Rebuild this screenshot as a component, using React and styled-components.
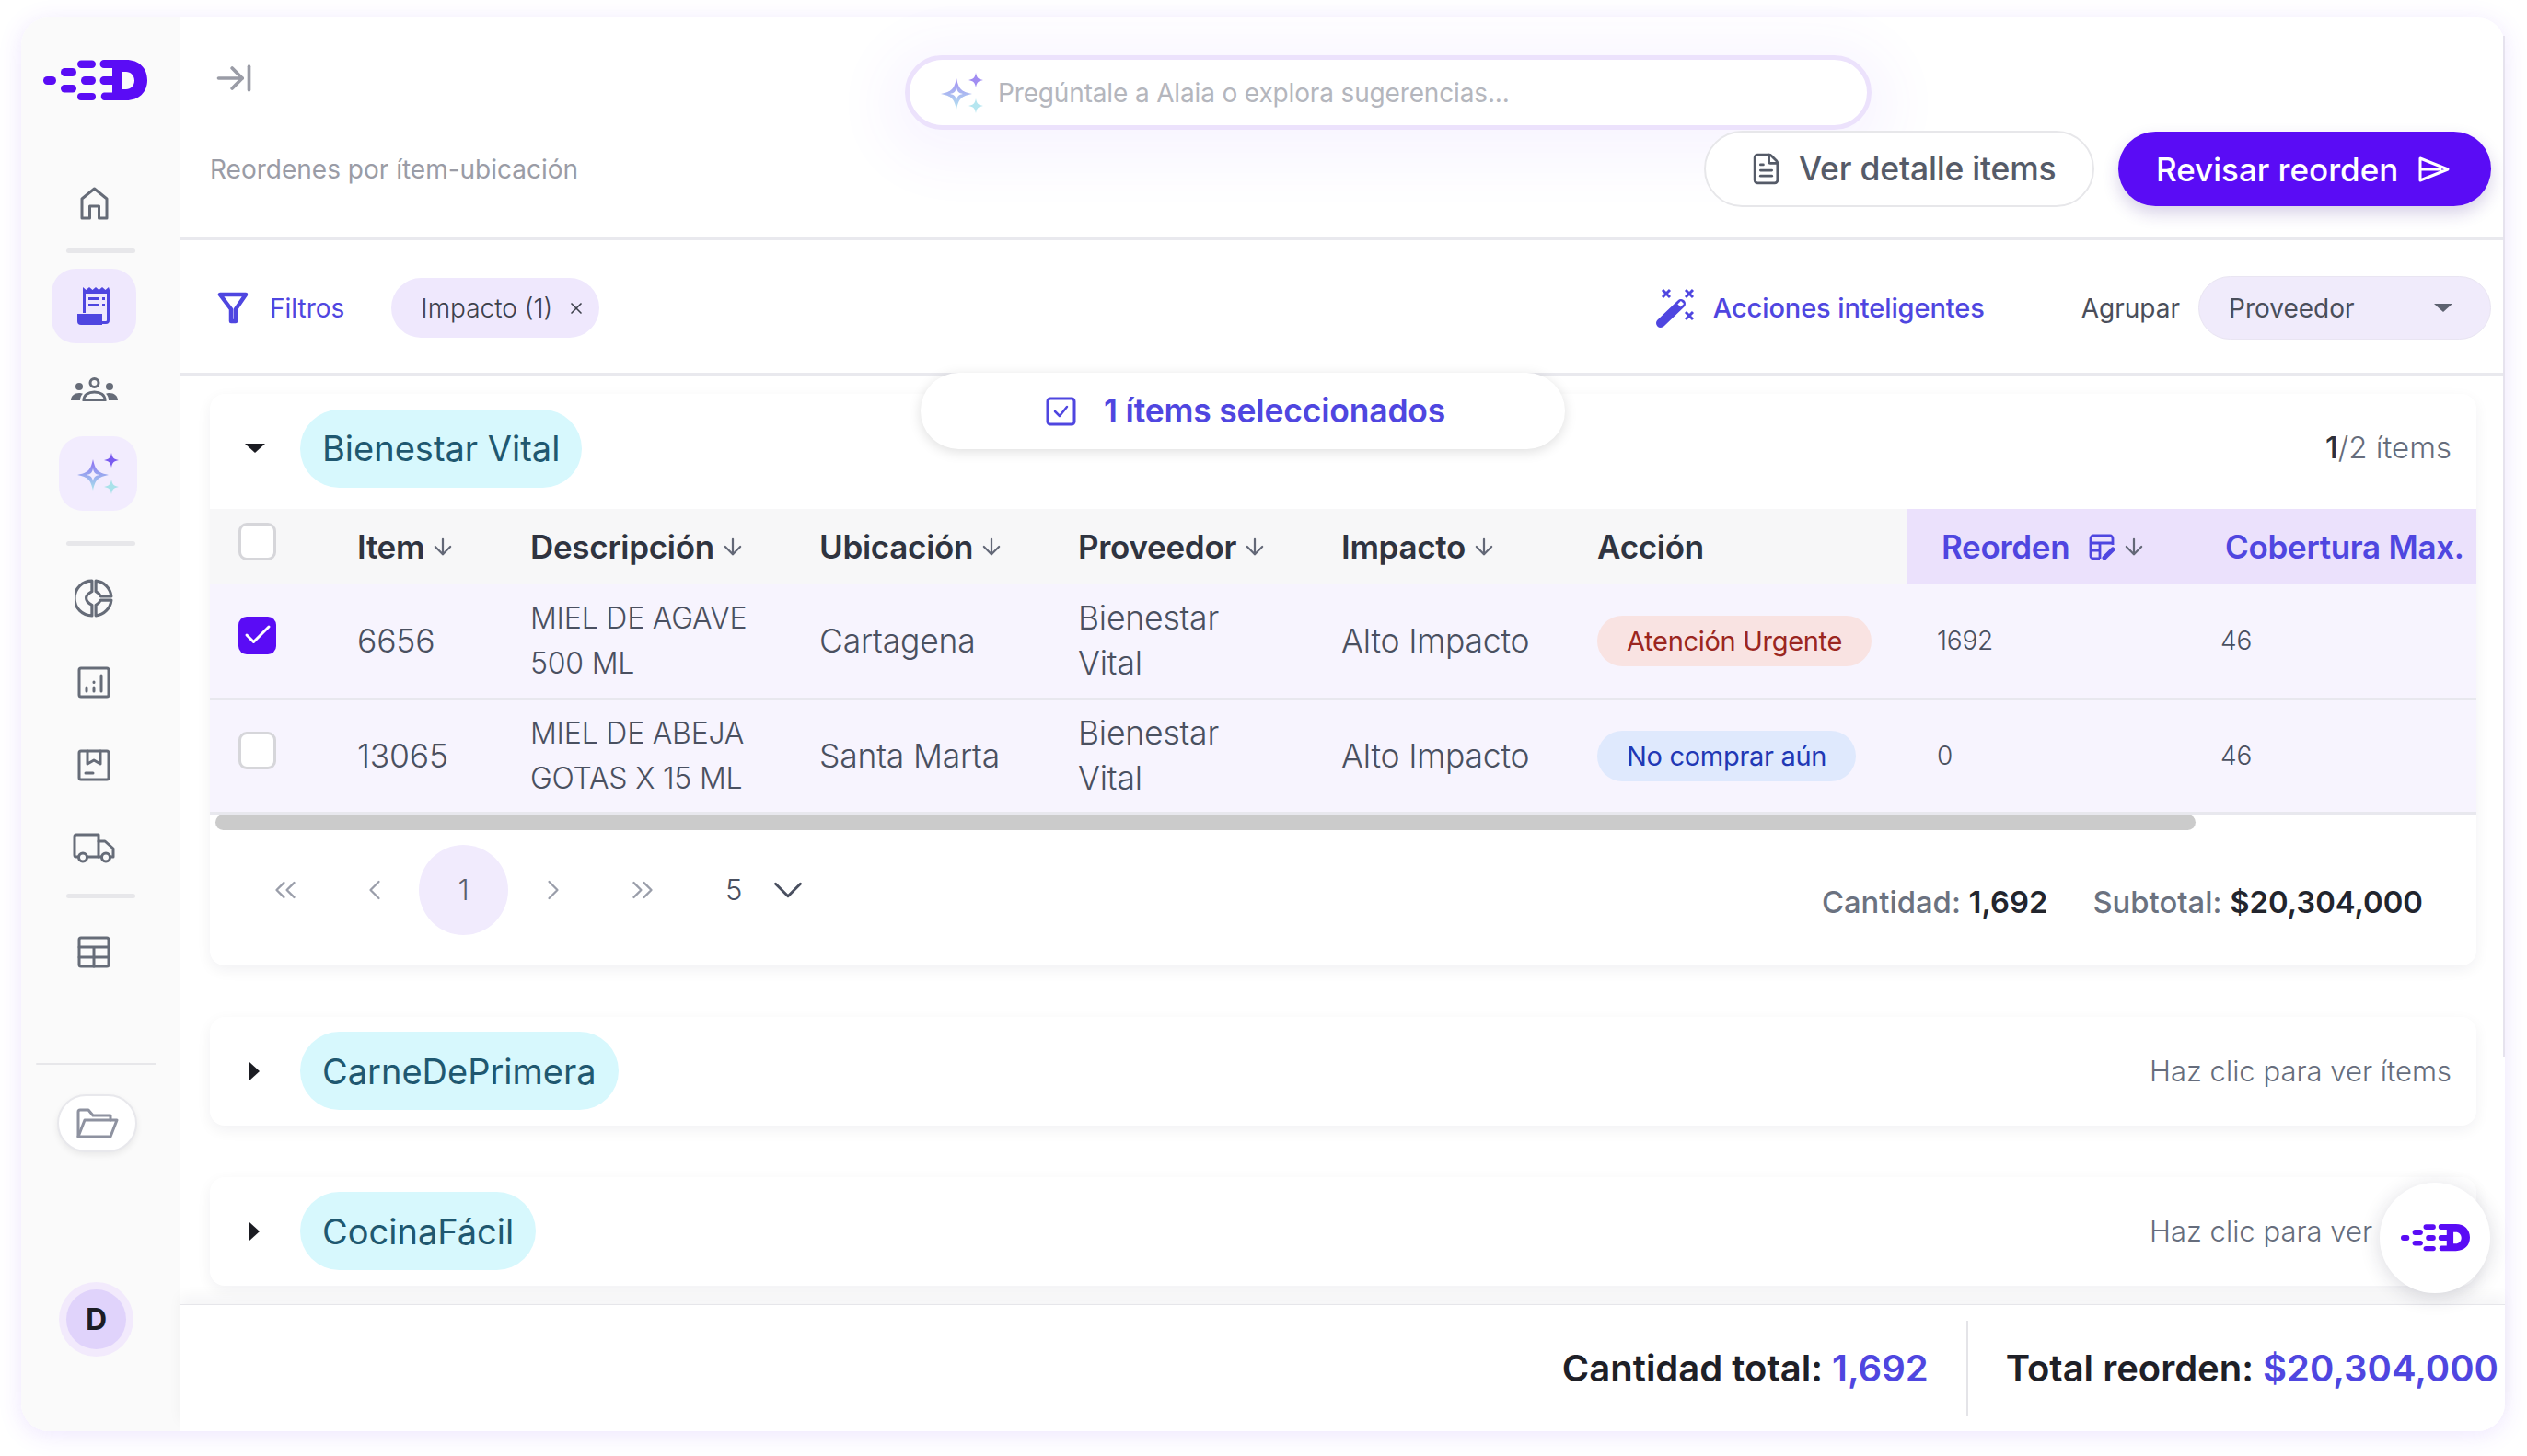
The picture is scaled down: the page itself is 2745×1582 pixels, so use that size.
import styled, { createGlobalStyle } from "styled-components";
import {
  ArrowDown,
  ArrowRightToLine,
  Check,
  ChevronDown,
  ChevronLeft,
  ChevronRight,
  ChevronsLeft,
  ChevronsRight,
  FileText,
  X,
} from "lucide-react";

const violet = "#5a0cf5";
const indigo = "#4f46e0";

const GlobalStyle = createGlobalStyle`
  * { box-sizing: border-box; }
  html, body { margin: 0; background: #fff; }
  body {
    font-family: Inter, "Open Sans", sans-serif;
    overflow: hidden;
    color: #2c303a;
  }
`;

const Page = styled.div`
  width: 2745px;
  height: 1582px;
  padding: 19px 0 0 23px;
`;

const Shell = styled.div`
  position: relative;
  display: flex;
  width: 2698px;
  height: 1536px;
  border-radius: 30px;
  background: #fff;
  box-shadow: 0 4px 26px rgba(120, 60, 245, 0.13);
`;

const ScrollEdge = styled.span`
  position: absolute;
  top: 20px;
  right: 0;
  width: 2px;
  height: 1109px;
  background: #e6e3ee;
`;

const Sidebar = styled.aside`
  flex: 0 0 172px;
  display: flex;
  flex-direction: column;
  align-items: flex-start;
  background: #fafafa;
  border-radius: 30px 0 0 30px;
`;

const LogoMark = styled.svg`
  display: block;
  flex: none;
  margin-left: ${(p) => p.$left || 0}px;
  margin-top: ${(p) => p.$top || 0}px;
`;

const NavSlot = styled.div`
  display: flex;
  align-items: center;
  justify-content: center;
  width: ${(p) => p.$w || 92}px;
  height: ${(p) => p.$h || 60}px;
  margin-top: ${(p) => p.$mt}px;
  margin-left: ${(p) => p.$ml || 33}px;
  border-radius: 26px;
  background: ${(p) => p.$bg || "transparent"};
  color: #666c78;
`;

const NavRule = styled.div`
  width: ${(p) => p.$w || 75}px;
  height: ${(p) => p.$h || 5}px;
  margin-top: ${(p) => p.$mt}px;
  margin-left: ${(p) => p.$ml || 49}px;
  border-radius: 3px;
  background: #e7e7ea;
`;

const FolderButton = styled.button`
  display: flex;
  align-items: center;
  justify-content: center;
  width: 87px;
  height: 63px;
  margin-top: 32px;
  margin-left: 39px;
  padding: 0;
  border: 2px solid #e8e8ec;
  border-radius: 32px;
  background: #fff;
  box-shadow: 0 3px 7px rgba(0, 0, 0, 0.07);
  color: #8e92a0;
`;

const Avatar = styled.div`
  display: flex;
  align-items: center;
  justify-content: center;
  width: 65px;
  height: 65px;
  margin-top: 149px;
  margin-left: 49px;
  border-radius: 50%;
  background: #e0d3fb;
  box-shadow: 0 0 0 8px #f2eafc;
  color: #1c1d24;
  font-size: 32px;
  font-weight: 700;
`;

const Main = styled.main`
  flex: 1;
  min-width: 0;
  display: flex;
  flex-direction: column;
`;

const Header = styled.header`
  flex: 0 0 242px;
  padding-top: 41px;
  border-bottom: 3px solid #e9e9ee;
`;

const HeaderTop = styled.div`
  display: flex;
  align-items: flex-start;
  height: 82px;
  padding-left: 37px;
`;

const Collapse = styled.div`
  display: flex;
  width: 44px;
  height: 44px;
  margin-top: 3px;
  color: #9a9ca6;
`;

const SearchBox = styled.div`
  display: flex;
  align-items: center;
  width: 1050px;
  height: 81px;
  margin-left: 707px;
  padding-left: 34px;
  border: 5px solid #ece2fc;
  border-radius: 41px;
  background: #fff;
  box-shadow: 0 12px 60px 24px rgba(130, 80, 250, 0.055);
`;

const Placeholder = styled.span`
  margin-left: 16px;
  color: #b4b6bd;
  font-size: 28px;
  letter-spacing: -0.15px;
`;

const HeaderBottom = styled.div`
  display: flex;
  align-items: center;
  height: 83px;
  padding: 0 15px 0 33px;
`;

const PageTitle = styled.h1`
  flex: 1;
  margin: 0;
  color: #9a9ca6;
  font-size: 28px;
  font-weight: 400;
`;

const GhostButton = styled.button`
  display: flex;
  align-items: center;
  gap: 17px;
  height: 83px;
  width: 424px;
  padding: 0 0 0 47px;
  border: 2px solid #e7e7ea;
  border-radius: 42px;
  background: #fff;
  color: #555b68;
  font: 500 35.5px Inter, sans-serif;
  letter-spacing: -0.2px;
`;

const PrimaryButton = styled.button`
  display: flex;
  align-items: center;
  gap: 22px;
  height: 81px;
  width: 405px;
  margin-left: 26px;
  padding: 0 0 0 41px;
  border: none;
  border-radius: 41px;
  background: ${violet};
  box-shadow: 0 8px 18px rgba(60, 30, 140, 0.2);
  color: #fff;
  font: 500 35px Inter, sans-serif;
`;

const FilterBar = styled.div`
  flex: 0 0 147px;
  display: flex;
  align-items: center;
  padding: 3px 15px 0 41px;
  border-bottom: 3px solid #e9e9ee;
  color: #4b5060;
`;

const FunnelWrap = styled.span`
  display: flex;
  margin-right: 23px;
`;

const FilterLink = styled.span`
  color: ${indigo};
  font-size: 28px;
  font-weight: 400;
`;

const Chip = styled.div`
  display: flex;
  align-items: center;
  gap: 16px;
  height: 65px;
  margin-left: 51px;
  padding: 0 15px 0 32px;
  border-radius: 33px;
  background: #efe8fd;
  color: #3d404b;
  font-size: 28px;
  font-weight: 350;
`;

const SmartActions = styled.div`
  display: flex;
  align-items: center;
  gap: 17px;
  margin-left: auto;
  color: ${indigo};
  font-size: 29px;
  font-weight: 500;
  letter-spacing: -0.1px;
`;

const GroupLabel = styled.span`
  margin-left: 105px;
  color: #4a4e5a;
  font-size: 28px;
`;

const GroupSelect = styled.div`
  display: flex;
  align-items: center;
  justify-content: space-between;
  width: 318px;
  height: 69px;
  margin-left: 20px;
  padding: 0 41px 0 32px;
  border: 1px solid #e9e5f2;
  border-radius: 35px;
  background: #f0ebfb;
  color: #4a4e5a;
  font-size: 28px;
`;

const CaretDown = styled.span`
  width: 0;
  height: 0;
  border-left: 10px solid transparent;
  border-right: 10px solid transparent;
  border-top: 9px solid #5d6270;
`;

const SelectedPill = styled.div`
  position: absolute;
  top: 386px;
  left: 977px;
  z-index: 3;
  display: flex;
  align-items: center;
  gap: 30px;
  width: 700px;
  height: 83px;
  padding-left: 136px;
  border-radius: 42px;
  background: #fff;
  box-shadow: 0 3px 14px rgba(0, 0, 0, 0.13);
  color: ${indigo};
  font-size: 35.5px;
  font-weight: 600;
  letter-spacing: -0.2px;
`;

const Content = styled.div`
  flex: 1;
  min-height: 0;
  overflow: hidden;
  display: flex;
  flex-direction: column;
  gap: 56px;
  padding: 20px 31px 0 33px;
`;

const GroupCard = styled.section`
  flex: none;
  border-radius: 16px;
  background: #fff;
  box-shadow: 0 5px 16px rgba(20, 20, 50, 0.06);
`;

const GroupHead = styled.div`
  display: flex;
  align-items: center;
  height: ${(p) => p.$h}px;
  padding: 0 27px ${(p) => p.$low || 0}px 43px;
`;

const Caret = styled.span`
  width: 0;
  height: 0;
  ${(p) =>
    p.$open
      ? `border-left: 11px solid transparent;
         border-right: 11px solid transparent;
         border-top: 10px solid #1b1c22;
         margin: 0 38px 0 -5px;`
      : `border-top: 10px solid transparent;
         border-bottom: 10px solid transparent;
         border-left: 11px solid #1b1c22;
         margin-right: 44px;`}
`;

const GroupName = styled.div`
  display: flex;
  align-items: center;
  height: 85px;
  padding: 0 24px;
  border-radius: 43px;
  background: #d7f8fd;
  color: #1f5870;
  font-size: 38px;
  font-weight: 400;
`;

const GroupHint = styled.span`
  margin-left: auto;
  margin-bottom: ${(p) => (p.$count ? 3 : 0)}px;
  color: #666d7c;
  font-size: ${(p) => (p.$count ? 33 : 31)}px;
  font-weight: 300;

  b {
    color: #2c303a;
    font-weight: 500;
  }
`;

const Table = styled.table`
  width: 2462px;
  border-collapse: collapse;
  table-layout: fixed;
`;

const Th = styled.th`
  height: 82px;
  padding: 0 0 0 ${(p) => p.$pad || 0}px;
  background: ${(p) => (p.$accent ? "#ebe1fc" : "#f7f7f8")};
  color: ${(p) => (p.$accent ? indigo : "#2f3440")};
  font-size: 35px;
  font-weight: 600;
  letter-spacing: -0.3px;
  text-align: left;
  white-space: nowrap;
`;

const ThInner = styled.span`
  display: inline-flex;
  align-items: center;
  gap: 6px;

  svg.sort {
    color: #636877;
  }
`;

const Row = styled.tr`
  background: #f7f4fe;
  border-bottom: 3px solid #e8e8ee;
`;

const Td = styled.td`
  height: 124px;
  padding: 0 0 0 ${(p) => p.$pad || 0}px;
  color: #4a5060;
  font-size: ${(p) => p.$size || 35.5}px;
  font-weight: 300;
  line-height: 49px;
  letter-spacing: -0.2px;
`;

const Box = styled.span`
  display: flex;
  align-items: center;
  justify-content: center;
  width: 41px;
  height: 41px;
  margin: 0 0 12px 31px;
  border: ${(p) => (p.$on ? "none" : "3px solid #d6d6da")};
  border-radius: 9px;
  background: ${(p) => (p.$on ? violet : "#fff")};
  color: #fff;
`;

const Badge = styled.span`
  display: inline-flex;
  align-items: center;
  height: 55px;
  padding: 0 32px;
  border-radius: 28px;
  background: ${(p) => p.$bg};
  color: ${(p) => p.$fg};
  font-size: 29px;
  font-weight: 400;
  letter-spacing: -0.3px;
`;

const ScrollThumb = styled.div`
  width: 2151px;
  height: 17px;
  margin-left: 6px;
  border-radius: 9px;
  background: #cbcbcb;
`;

const CardFoot = styled.div`
  display: flex;
  height: 147px;
  padding: 0 58px 0 33px;
`;

const Pager = styled.div`
  display: flex;
  align-items: center;
  height: 98px;
  margin-top: 16px;
  color: #9a9eaa;
`;

const PageCell = styled.span`
  display: flex;
  align-items: center;
  justify-content: center;
  width: 97px;
  height: 98px;
  border-radius: 50%;
  background: ${(p) => (p.$on ? "#f1ebfd" : "transparent")};
  font-size: 31px;
  font-weight: 300;
  color: ${(p) => (p.$on ? "#5a5f6c" : "inherit")};
`;

const PageSize = styled.span`
  display: flex;
  align-items: center;
  gap: 23px;
  margin-left: 42px;
  color: #4a5060;
  font-size: 31px;
  font-weight: 300;
`;

const CardTotals = styled.div`
  display: flex;
  align-items: center;
  gap: 49px;
  height: 50px;
  margin: 53px 0 0 auto;
  color: #6b7280;
  font-size: 32.8px;
  font-weight: 500;

  b {
    color: #22252d;
    font-weight: 600;
  }
`;

const Footer = styled.footer`
  position: relative;
  flex: 0 0 138px;
  display: flex;
  align-items: center;
  justify-content: flex-end;
  padding-right: 7px;
  border-top: 1px solid #e6e6ea;
  border-radius: 0 0 30px 0;
  background: #fff;
  box-shadow: 0 -10px 14px rgba(30, 30, 50, 0.04);
  color: #1e2027;
  font-size: 40px;
  font-weight: 600;

  b {
    color: ${indigo};
    font-weight: 600;
  }
`;

const FootDivider = styled.span`
  width: 2px;
  height: 104px;
  margin: 0 41px;
  background: #e4e4e8;
`;

const FloatingLogo = styled.button`
  position: absolute;
  right: 16px;
  bottom: 150px;
  z-index: 3;
  display: flex;
  align-items: center;
  justify-content: center;
  width: 120px;
  height: 120px;
  padding: 0;
  border: none;
  border-radius: 50%;
  background: #fff;
  box-shadow: 0 4px 22px rgba(30, 30, 60, 0.16);
`;

const Logo = ({ width = 113, ...rest }) => (
  <LogoMark width={width} viewBox="0 0 113 44" fill={violet} {...rest}>
    <rect x="0" y="18" width="14" height="9" rx="4.5" />
    <rect x="19" y="9" width="17" height="9" rx="4.5" />
    <rect x="19" y="27" width="17" height="8.5" rx="4.2" />
    <rect x="37" y="0.5" width="20" height="8.5" rx="4.2" />
    <rect x="41" y="18" width="16" height="9" rx="4.5" />
    <rect x="37" y="36" width="20" height="8" rx="4" />
    <path
      fillRule="evenodd"
      d="M66 0H90C104 0 113 9 113 22S104 44 90 44H66A4.4 4.4 0 0 1 66 35.500H75V27H66A4.500 4.500 0 0 1 66 18H75V9H66A4.500 4.500 0 0 1 66 0ZM86 13V32H90C95 32 99 28 99 22.500S95 13 90 13Z"
    />
  </LogoMark>
);

const Star = ({ cx, cy, r, fill }) => (
  <path
    fill={fill}
    d={`M${cx} ${cy - r}C${cx + r * 0.15} ${cy - r * 0.3} ${cx + r * 0.3} ${cy - r * 0.15} ${cx + r} ${cy}C${cx + r * 0.3} ${cy + r * 0.15} ${cx + r * 0.15} ${cy + r * 0.3} ${cx} ${cy + r}C${cx - r * 0.15} ${cy + r * 0.3} ${cx - r * 0.3} ${cy + r * 0.15} ${cx - r} ${cy}C${cx - r * 0.3} ${cy - r * 0.15} ${cx - r * 0.15} ${cy - r * 0.3} ${cx} ${cy - r}Z`}
  />
);

const NavSparkles = () => (
  <svg width="46" height="46" viewBox="0 0 46 46">
    <defs>
      <linearGradient id="navStar" x1="0" y1="0" x2="0" y2="1">
        <stop offset="0" stopColor="#8a6cf2" />
        <stop offset="1" stopColor="#a9e4ec" />
      </linearGradient>
    </defs>
    <Star cx={17} cy={24} r={17} fill="url(#navStar)" />
    <Star cx={17} cy={24} r={7} fill="#f2ecfe" />
    <Star cx={37} cy={8} r={8} fill="#7a5bf0" />
    <Star cx={37} cy={37} r={8} fill="#a9e2ea" />
  </svg>
);

const SearchSparkles = () => (
  <svg width="46" height="44" viewBox="0 0 46 44">
    <defs>
      <linearGradient id="searchStar" x1="0" y1="0" x2="0" y2="1">
        <stop offset="0" stopColor="#a18df2" />
        <stop offset="1" stopColor="#b5e6f0" />
      </linearGradient>
    </defs>
    <Star cx={17} cy={23} r={17} fill="url(#searchStar)" />
    <Star cx={17} cy={23} r={7} fill="#fff" />
    <Star cx={38} cy={8} r={8} fill="#a18df2" />
    <Star cx={38} cy={36} r={8} fill="#b5e6f0" />
  </svg>
);

const stroke = {
  fill: "none",
  stroke: "currentColor",
  strokeWidth: 3,
  strokeLinejoin: "round",
  strokeLinecap: "round",
};

const HomeIcon = () => (
  <svg width="31" height="36" viewBox="0 0 31 36" {...stroke}>
    <path d="M2 34V13L15.500 2 29 13V34H20.500V21H10.500V34Z" />
  </svg>
);

const ReceiptIcon = () => (
  <svg width="36" height="41" viewBox="0 0 36 41" fill={indigo}>
    <path d="M6 0l3.500 3L13 0l3.500 3L20 0l3.500 3L27 0l3.500 3L34 0 35 3V36a4 4 0 0 1-4 4H27V37h4a1 1 0 0 0 1-1V7H9V28H6Z" />
    <rect x="12" y="11" width="12" height="3" />
    <rect x="12" y="18" width="12" height="3" />
    <rect x="27" y="11" width="3" height="3" />
    <rect x="27" y="18" width="3" height="3" />
    <path d="M0 29H27V41H4a4 4 0 0 1-4-4Z" />
  </svg>
);

const TeamIcon = () => (
  <svg width="51" height="26" viewBox="0 0 51 26" fill="currentColor">
    <circle cx="25.500" cy="6" r="4.500" fill="none" stroke="currentColor" strokeWidth="3" />
    <circle cx="9" cy="10" r="4" />
    <circle cx="42" cy="10" r="4" />
    <path d="M14 25c0-6 5-9 11.500-9S37 19 37 25Z" fill="none" stroke="currentColor" strokeWidth="3" />
    <path d="M0 25c0-5 4-8 9-8 1.500 0 3 .3 4 .8-2 2-3 4.500-3 7.200Z" />
    <path d="M51 25c0-5-4-8-9-8-1.500 0-3 .3-4 .8 2 2 3 4.500 3 7.200Z" />
  </svg>
);

const PieIcon = () => (
  <svg width="42" height="42" viewBox="0 0 40 40" {...stroke}>
    <path d="M18 2A18 18 0 0 0 18 38V27C14 25 12 23 12 20S14 15 18 13Z" />
    <path d="M22 2A18 18 0 0 1 38 18H27C26 16 24 14 22 13Z" />
    <path d="M38 22A18 18 0 0 1 22 38V27C24 26 26 24 27 22Z" />
  </svg>
);

const BarsIcon = () => (
  <svg width="36" height="35" viewBox="0 0 36 35" {...stroke}>
    <rect x="2" y="2" width="32" height="31" rx="2" />
    <path d="M10 23V27M18 23V27M18 17V17.500M26 10V27" />
  </svg>
);

const BoxIcon = () => (
  <svg width="36" height="35" viewBox="0 0 36 35" {...stroke}>
    <rect x="2" y="2" width="32" height="31" rx="2" />
    <path d="M11 2V16L18 12 25 16V2M9 26H17" />
  </svg>
);

const TruckIcon = () => (
  <svg width="46" height="33" viewBox="0 0 46 33" {...stroke}>
    <path d="M6 26H4a2 2 0 0 1-2-2V4a2 2 0 0 1 2-2H28V26H16" />
    <path d="M28 9h7l9 8v9h-3M28 26h3" />
    <circle cx="11" cy="26.500" r="4.500" />
    <circle cx="36" cy="26.500" r="4.500" />
  </svg>
);

const GridIcon = () => (
  <svg width="36" height="35" viewBox="0 0 36 35" {...stroke}>
    <rect x="2" y="2" width="32" height="31" rx="2" />
    <path d="M2 12H34M2 23H34M18 12V33" />
  </svg>
);

const FolderIcon = () => (
  <svg width="47" height="33" viewBox="0 0 47 33" {...stroke}>
    <path d="M3 31V4a2 2 0 0 1 2-2H14L19 8H38V13" />
    <path d="M3 31L10 13H45L38 31Z" />
  </svg>
);

const FunnelIcon = () => (
  <svg width="34" height="35" viewBox="0 0 34 35" fill="none" stroke={indigo} strokeWidth="4.500" strokeLinejoin="round">
    <path d="M3 3H31L20 19V32H15V19Z" />
  </svg>
);

const WandIcon = () => (
  <svg width="46" height="44" viewBox="0 0 46 44" fill="none" stroke={indigo}>
    <path d="M6 38L28 17" strokeWidth="10" strokeLinecap="round" />
    <path d="M26 19L29.500 15.500" stroke="#fff" strokeWidth="4.500" />
    <path d="M8 2l8 8M16 2l-8 8M33 2l8 8M41 2l-8 8M33 26l8 8M41 26l-8 8" strokeWidth="3" />
  </svg>
);

const SendIcon = () => (
  <svg width="34" height="28" viewBox="0 0 34 28" {...stroke}>
    <path d="M2 2L32 14 2 26ZM2 14H24" />
  </svg>
);

const CheckSquare = () => (
  <svg width="33" height="32" viewBox="0 0 33 32" {...stroke}>
    <rect x="2" y="2" width="29" height="28" rx="3" />
    <path d="M10 16l5 5 8-10" strokeWidth="2.500" />
  </svg>
);

const EditTableIcon = () => (
  <svg width="29" height="29" viewBox="0 0 29 29" fill="none" stroke={indigo} strokeWidth="2.800">
    <path d="M12 27H5a3 3 0 0 1-3-3V5a3 3 0 0 1 3-3H23a3 3 0 0 1 3 3V12M2 10H26M2 18H13M12 10V27" />
    <path d="M17 26L26 17" strokeWidth="5" strokeLinecap="round" />
  </svg>
);

const Sort = () => <ArrowDown className="sort" size={28} strokeWidth={1.9} />;

const rows = [
  {
    id: "6656",
    selected: true,
    description: ["MIEL DE AGAVE", "500 ML"],
    location: "Cartagena",
    action: "Atención Urgente",
    bg: "#f9e3e2",
    fg: "#9b2620",
    reorder: "1692",
  },
  {
    id: "13065",
    selected: false,
    description: ["MIEL DE ABEJA", "GOTAS X 15 ML"],
    location: "Santa Marta",
    action: "No comprar aún",
    bg: "#dfe9fd",
    fg: "#2138b5",
    reorder: "0",
  },
];

const headers = ["Item", "Descripción", "Ubicación", "Proveedor", "Impacto"];

export default function App() {
  return (
    <Page>
      <GlobalStyle />
      <Shell>
        <Sidebar>
          <Logo $left={24} $top={46} />
          <NavSlot $mt={86} $h={52}>
            <HomeIcon />
          </NavSlot>
          <NavRule $mt={23} />
          <NavSlot $mt={17} $h={81} $bg="#efe8fd">
            <ReceiptIcon />
          </NavSlot>
          <NavSlot $mt={20}>
            <TeamIcon />
          </NavSlot>
          <NavSlot $mt={21} $h={81} $w={85} $ml={41} $bg="#f2ecfe">
            <NavSparkles />
          </NavSlot>
          <NavRule $mt={33} />
          <NavSlot $mt={27}>
            <PieIcon />
          </NavSlot>
          <NavSlot $mt={31}>
            <BarsIcon />
          </NavSlot>
          <NavSlot $mt={30}>
            <BoxIcon />
          </NavSlot>
          <NavSlot $mt={30}>
            <TruckIcon />
          </NavSlot>
          <NavRule $mt={20} />
          <NavSlot $mt={28}>
            <GridIcon />
          </NavSlot>
          <NavRule $mt={91} $w={131} $h={2} $ml={16} />
          <FolderButton>
            <FolderIcon />
          </FolderButton>
          <Avatar>D</Avatar>
        </Sidebar>

        <Main>
          <Header>
            <HeaderTop>
              <Collapse>
                <ArrowRightToLine size={44} strokeWidth={2} />
              </Collapse>
              <SearchBox>
                <SearchSparkles />
                <Placeholder>Pregúntale a Alaia o explora sugerencias...</Placeholder>
              </SearchBox>
            </HeaderTop>
            <HeaderBottom>
              <PageTitle>Reordenes por ítem-ubicación</PageTitle>
              <GhostButton>
                <FileText size={37} strokeWidth={1.8} />
                Ver detalle items
              </GhostButton>
              <PrimaryButton>
                Revisar reorden
                <SendIcon />
              </PrimaryButton>
            </HeaderBottom>
          </Header>

          <FilterBar>
            <FunnelWrap>
              <FunnelIcon />
            </FunnelWrap>
            <FilterLink>Filtros</FilterLink>
            <Chip>
              Impacto (1)
              <X size={20} strokeWidth={2} />
            </Chip>
            <SmartActions>
              <WandIcon />
              Acciones inteligentes
            </SmartActions>
            <GroupLabel>Agrupar</GroupLabel>
            <GroupSelect>
              Proveedor
              <CaretDown />
            </GroupSelect>
          </FilterBar>

          <Content>
            <GroupCard>
              <GroupHead $h={125} $low={7}>
                <Caret $open />
                <GroupName>Bienestar Vital</GroupName>
                <GroupHint $count>
                  <b>1</b>/2 ítems
                </GroupHint>
              </GroupHead>
              <Table>
                <colgroup>
                  <col style={{ width: 160 }} />
                  <col style={{ width: 188 }} />
                  <col style={{ width: 314 }} />
                  <col style={{ width: 281 }} />
                  <col style={{ width: 286 }} />
                  <col style={{ width: 278 }} />
                  <col style={{ width: 337 }} />
                  <col style={{ width: 308 }} />
                  <col style={{ width: 310 }} />
                </colgroup>
                <thead>
                  <tr>
                    <Th>
                      <Box />
                    </Th>
                    {headers.map((label) => (
                      <Th key={label}>
                        <ThInner>
                          {label}
                          <Sort />
                        </ThInner>
                      </Th>
                    ))}
                    <Th>Acción</Th>
                    <Th $accent $pad={37}>
                      <ThInner>
                        Reorden
                        <span style={{ width: 9 }} />
                        <EditTableIcon />
                        <Sort />
                      </ThInner>
                    </Th>
                    <Th $accent $pad={37}>
                      Cobertura Max.
                    </Th>
                  </tr>
                </thead>
                <tbody>
                  {rows.map((row) => (
                    <Row key={row.id}>
                      <Td>
                        <Box $on={row.selected}>
                          {row.selected && <Check size={36} strokeWidth={2} />}
                        </Box>
                      </Td>
                      <Td>{row.id}</Td>
                      <Td $size={32}>
                        {row.description[0]}
                        <br />
                        {row.description[1]}
                      </Td>
                      <Td>{row.location}</Td>
                      <Td>
                        Bienestar
                        <br />
                        Vital
                      </Td>
                      <Td>Alto Impacto</Td>
                      <Td>
                        <Badge $bg={row.bg} $fg={row.fg}>
                          {row.action}
                        </Badge>
                      </Td>
                      <Td $pad={32} $size={28}>
                        {row.reorder}
                      </Td>
                      <Td $pad={32} $size={28}>
                        46
                      </Td>
                    </Row>
                  ))}
                </tbody>
              </Table>
              <ScrollThumb />
              <CardFoot>
                <Pager>
                  <PageCell>
                    <ChevronsLeft size={38} strokeWidth={1.5} />
                  </PageCell>
                  <PageCell>
                    <ChevronLeft size={36} strokeWidth={1.5} />
                  </PageCell>
                  <PageCell $on>1</PageCell>
                  <PageCell>
                    <ChevronRight size={36} strokeWidth={1.5} />
                  </PageCell>
                  <PageCell>
                    <ChevronsRight size={38} strokeWidth={1.5} />
                  </PageCell>
                  <PageSize>
                    5
                    <ChevronDown size={54} strokeWidth={1.3} />
                  </PageSize>
                </Pager>
                <CardTotals>
                  <span>
                    Cantidad: <b>1,692</b>
                  </span>
                  <span>
                    Subtotal: <b>$20,304,000</b>
                  </span>
                </CardTotals>
              </CardFoot>
            </GroupCard>

            <GroupCard>
              <GroupHead $h={118}>
                <Caret />
                <GroupName>CarneDePrimera</GroupName>
                <GroupHint>Haz clic para ver ítems</GroupHint>
              </GroupHead>
            </GroupCard>

            <GroupCard>
              <GroupHead $h={118}>
                <Caret />
                <GroupName>CocinaFácil</GroupName>
                <GroupHint>Haz clic para ver ítems</GroupHint>
              </GroupHead>
            </GroupCard>
          </Content>

          <Footer>
            <span>
              Cantidad total: <b>1,692</b>
            </span>
            <FootDivider />
            <span>
              Total reorden: <b>$20,304,000</b>
            </span>
          </Footer>
        </Main>

        <ScrollEdge />
        <SelectedPill>
          <CheckSquare />1 ítems seleccionados
        </SelectedPill>
        <FloatingLogo>
          <Logo width={75} />
        </FloatingLogo>
      </Shell>
    </Page>
  );
}
